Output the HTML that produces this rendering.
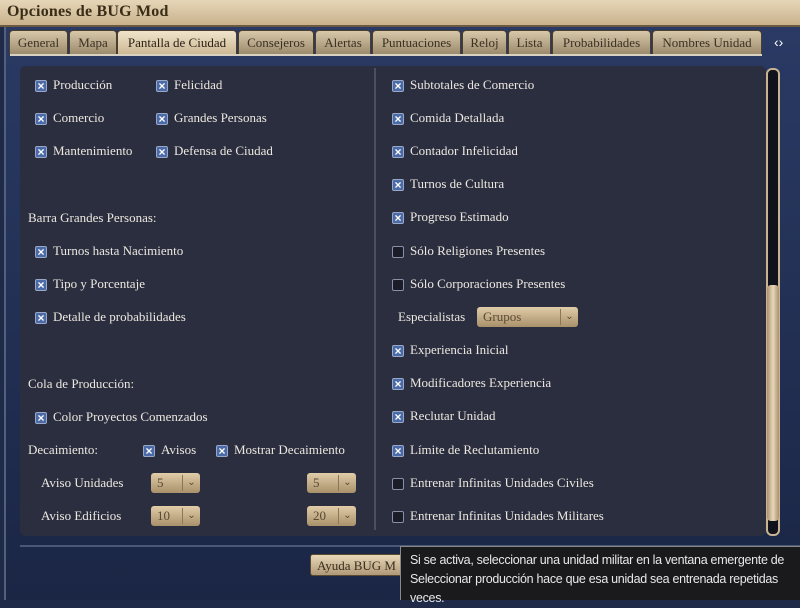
<!DOCTYPE html><html><head><style>
*{margin:0;padding:0;box-sizing:border-box}
body{width:800px;height:600px;overflow:hidden;background:#1f2a48;font-family:"Liberation Serif",serif;color:#e8e4da;position:relative}
.a{position:absolute;white-space:nowrap}
.title{left:0;top:0;width:800px;height:27px;background:linear-gradient(#e6d6b8,#c9b28c);border-bottom:2px solid #6b5a40}
.title span{position:absolute;left:7px;top:3px;font-size:16px;font-weight:bold;color:#3a2d18;letter-spacing:0.2px}
.frame{left:4px;top:27px;width:796px;height:573px;background:linear-gradient(#2a3a64,#1b2645);border-left:2px solid #52607e}
.tab{top:30px;height:24px;background:linear-gradient(#d8c8aa,#9c8a6c);border:1px solid #4a3e2c;border-bottom:none;border-radius:4px 4px 0 0;font-size:13px;color:#3a3024;text-align:center;line-height:23px}
.tab.on{background:linear-gradient(#f0e4cc,#cdb894);color:#2a2014}
.line{left:10px;top:54px;width:752px;height:2px;background:#d8d0c0}
.panel{left:20px;top:66px;width:746px;height:470px;background:#2b2e3f;border-radius:6px}
.div{left:374px;top:68px;width:2px;height:462px;background:#4a4e60}
.cb{width:12px;height:12px;border:1px solid #9aa8c8;border-radius:2px;background:#4a6aa8;color:#fff;font:bold 12px/10px "Liberation Sans",sans-serif;text-align:center}
.cb.off{background:#1a1c28;border-color:#8890a8}
.t{font-size:13px;color:#ece8e0}
.dd{height:20px;background:linear-gradient(#e0cca8,#a8906a);border-radius:3px;font-size:13px;color:#5a4a34;line-height:20px;padding-left:6px}
.dd i{position:absolute;right:0;top:2px;width:18px;height:16px;border-left:1px solid #8a7658;font-style:normal;font-size:10px;text-align:center;line-height:16px;color:#5a4a34}
.tip{left:400px;top:546px;width:400px;height:54px;background:#1a1a1c;border-top:1px solid #888;border-left:1px solid #888;font-family:"Liberation Sans",sans-serif;font-size:12.5px;line-height:19px;color:#e8e8e8;padding:4px 0 0 9px;letter-spacing:-0.3px}
</style></head><body>
<div class="a frame"></div>
<div class="a title"><span>Opciones de BUG Mod</span></div>
<div class="a tab" style="left:9px;width:59px">General</div>
<div class="a tab" style="left:69px;width:48px">Mapa</div>
<div class="a tab on" style="left:117px;width:120px">Pantalla de Ciudad</div>
<div class="a tab" style="left:238px;width:76px">Consejeros</div>
<div class="a tab" style="left:315px;width:56px">Alertas</div>
<div class="a tab" style="left:372px;width:89px">Puntuaciones</div>
<div class="a tab" style="left:462px;width:45px">Reloj</div>
<div class="a tab" style="left:508px;width:43px">Lista</div>
<div class="a tab" style="left:552px;width:99px">Probabilidades</div>
<div class="a tab" style="left:652px;width:110px">Nombres Unidad</div>
<div class="a" style="left:774px;top:34px;font-size:14px;color:#fff;font-family:'Liberation Sans'">‹›</div>
<div class="a line"></div>
<div class="a panel"></div>
<div class="a div"></div>
<div class="a" style="left:766px;top:68px;width:14px;height:468px;background:#11131c;border-radius:6px;border:2px solid #c8b490"></div>
<div class="a" style="left:767px;top:285px;width:12px;height:236px;background:linear-gradient(90deg,#a89070,#e8d8b8,#a89070);border-radius:4px"></div>
<div class="a" style="left:20px;top:545px;width:780px;height:2px;background:#4a5878"></div>
<div class="a" style="left:310px;top:554px;width:100px;height:22px;background:linear-gradient(#e8d8b8,#b09878);border:1px solid #5a4a30;border-radius:3px;font-size:13px;color:#3a2e1e;line-height:21px;padding-left:6px">Ayuda BUG M</div>

<div class="a cb" style="left:35px;top:80px">×</div><div class="a t" style="left:53px;top:77px">Producción</div>
<div class="a cb" style="left:156px;top:80px">×</div><div class="a t" style="left:174px;top:77px">Felicidad</div>
<div class="a cb" style="left:35px;top:113px">×</div><div class="a t" style="left:53px;top:110px">Comercio</div>
<div class="a cb" style="left:156px;top:113px">×</div><div class="a t" style="left:174px;top:110px">Grandes Personas</div>
<div class="a cb" style="left:35px;top:146px">×</div><div class="a t" style="left:53px;top:143px">Mantenimiento</div>
<div class="a cb" style="left:156px;top:146px">×</div><div class="a t" style="left:174px;top:143px">Defensa de Ciudad</div>
<div class="a t" style="left:28px;top:210px">Barra Grandes Personas:</div>
<div class="a cb" style="left:35px;top:246px">×</div><div class="a t" style="left:53px;top:243px">Turnos hasta Nacimiento</div>
<div class="a cb" style="left:35px;top:279px">×</div><div class="a t" style="left:53px;top:276px">Tipo y Porcentaje</div>
<div class="a cb" style="left:35px;top:312px">×</div><div class="a t" style="left:53px;top:309px">Detalle de probabilidades</div>
<div class="a t" style="left:28px;top:376px">Cola de Producción:</div>
<div class="a cb" style="left:35px;top:412px">×</div><div class="a t" style="left:53px;top:409px">Color Proyectos Comenzados</div>
<div class="a t" style="left:28px;top:442px">Decaimiento:</div>
<div class="a cb" style="left:143px;top:445px">×</div><div class="a t" style="left:161px;top:442px">Avisos</div>
<div class="a cb" style="left:216px;top:445px">×</div><div class="a t" style="left:234px;top:442px">Mostrar Decaimiento</div>
<div class="a t" style="left:41px;top:475px">Aviso Unidades</div>
<div class="a t" style="left:41px;top:508px">Aviso Edificios</div>
<div class="a dd" style="left:151px;top:473px;width:49px">5<i>⌄</i></div>
<div class="a dd" style="left:307px;top:473px;width:49px">5<i>⌄</i></div>
<div class="a dd" style="left:151px;top:506px;width:49px">10<i>⌄</i></div>
<div class="a dd" style="left:307px;top:506px;width:49px">20<i>⌄</i></div>

<div class="a cb" style="left:392px;top:80px">×</div><div class="a t" style="left:410px;top:77px">Subtotales de Comercio</div>
<div class="a cb" style="left:392px;top:113px">×</div><div class="a t" style="left:410px;top:110px">Comida Detallada</div>
<div class="a cb" style="left:392px;top:146px">×</div><div class="a t" style="left:410px;top:143px">Contador Infelicidad</div>
<div class="a cb" style="left:392px;top:179px">×</div><div class="a t" style="left:410px;top:176px">Turnos de Cultura</div>
<div class="a cb" style="left:392px;top:212px">×</div><div class="a t" style="left:410px;top:209px">Progreso Estimado</div>
<div class="a cb off" style="left:392px;top:246px"></div><div class="a t" style="left:410px;top:243px">Sólo Religiones Presentes</div>
<div class="a cb off" style="left:392px;top:279px"></div><div class="a t" style="left:410px;top:276px">Sólo Corporaciones Presentes</div>
<div class="a t" style="left:398px;top:309px">Especialistas</div>
<div class="a dd" style="left:477px;top:307px;width:101px">Grupos<i>⌄</i></div>
<div class="a cb" style="left:392px;top:345px">×</div><div class="a t" style="left:410px;top:342px">Experiencia Inicial</div>
<div class="a cb" style="left:392px;top:378px">×</div><div class="a t" style="left:410px;top:375px">Modificadores Experiencia</div>
<div class="a cb" style="left:392px;top:411px">×</div><div class="a t" style="left:410px;top:408px">Reclutar Unidad</div>
<div class="a cb" style="left:392px;top:445px">×</div><div class="a t" style="left:410px;top:442px">Límite de Reclutamiento</div>
<div class="a cb off" style="left:392px;top:478px"></div><div class="a t" style="left:410px;top:475px">Entrenar Infinitas Unidades Civiles</div>
<div class="a cb off" style="left:392px;top:511px"></div><div class="a t" style="left:410px;top:508px">Entrenar Infinitas Unidades Militares</div>

<div class="a tip">Si se activa, seleccionar una unidad militar en la ventana emergente de<br>Seleccionar producción hace que esa unidad sea entrenada repetidas<br>veces.</div>
</body></html>
